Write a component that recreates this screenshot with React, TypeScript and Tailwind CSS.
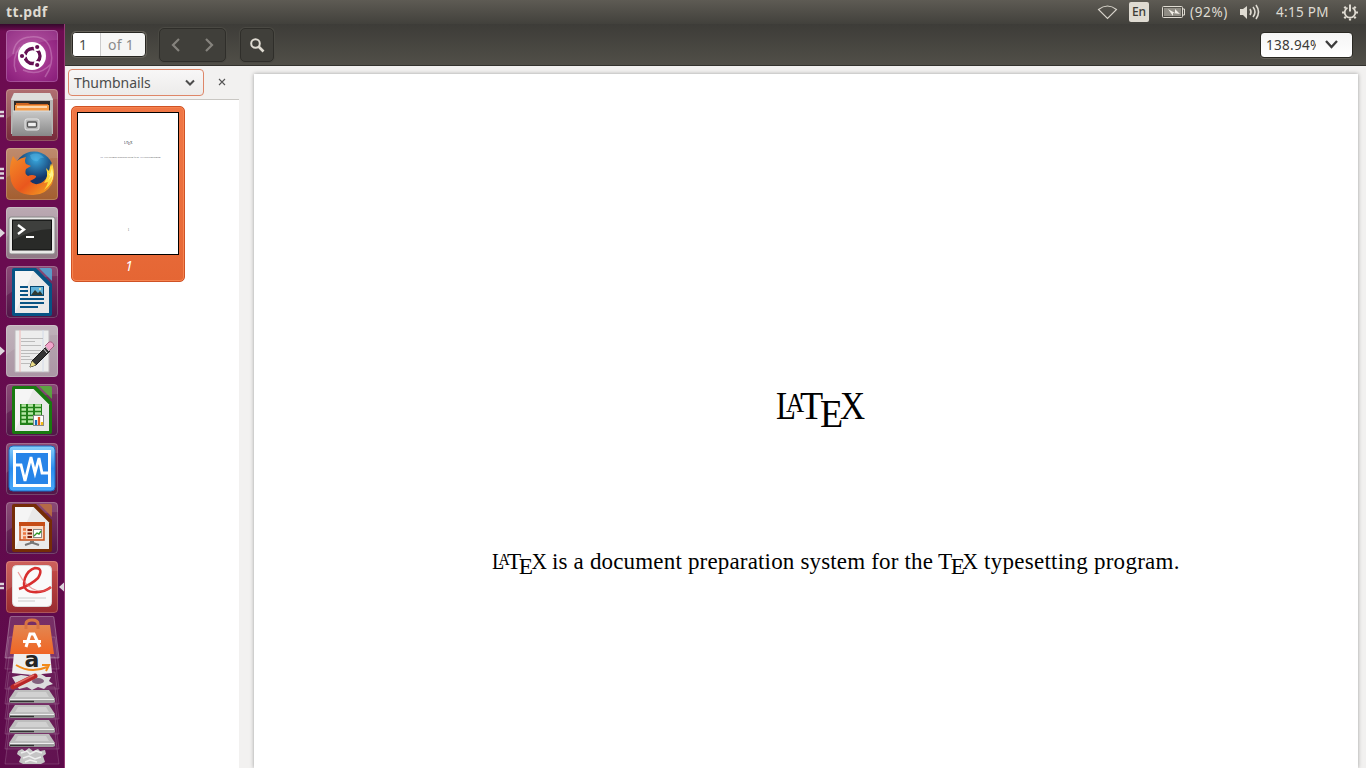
import type { ReactNode } from "react";

type TileProps = { bg: string; children: ReactNode; left?: "one" | "two" | "three"; active?: boolean };

function Tile({ bg, children, left, active }: TileProps) {
  return (
    <div className="relative flex h-[52px] w-16 shrink-0 pl-1.5">
      {left === "one" && (
        <svg className="absolute left-0 top-[21px]" width="5" height="10"><path d="M0 0.5L5 5L0 9.5Z" fill="#ddd5dc" /></svg>
      )}
      {left === "two" && (
        <svg className="absolute left-0 top-[21px]" width="5" height="9"><path d="M0 2h4M0 6h4" stroke="#ddd5dc" strokeWidth="2.4" /></svg>
      )}
      {left === "three" && (
        <svg className="absolute left-0 top-[19px]" width="5" height="13"><path d="M0 2h4M0 6.5h4M0 11h4" stroke="#ddd5dc" strokeWidth="2.4" /></svg>
      )}
      <div className={`relative h-[52px] w-[52px] overflow-hidden rounded-[4px] ${bg}`}>
        <svg width="52" height="52" viewBox="0 0 52 52" className="block">
          <path d="M0 0H52V10Q26 10 0 30Z" fill="#fff" opacity=".1" />
          {children}
          <rect x=".5" y=".5" width="51" height="51" rx="3.5" fill="none" stroke="#fff" strokeOpacity=".2" />
        </svg>
      </div>
      {active && (
        <svg className="absolute right-0 top-[21px]" width="5" height="10"><path d="M5 0.5L0 5L5 9.5Z" fill="#ddd5dc" /></svg>
      )}
    </div>
  );
}

function OfficePage({ dark, light, children }: { dark: string; light: string; children: ReactNode }) {
  return (
    <g>
      <path d="M8 2H30L46 18V48Q46 50 44 50H8Q6 50 6 48V4Q6 2 8 2Z" fill={dark} />
      <path d="M33 2H44Q46 2 46 4V15Z" fill={light} opacity=".85" />
      <path d="M9 5H27.500L43 20.500V47H9Z" fill="#f5f5f5" />
      <path d="M27.500 5L43 20.500V47L9 47Z" fill="#dedede" opacity=".5" />
      {children}
    </g>
  );
}

function Launcher() {
  return (
    <nav className="flex h-full w-[65px] shrink-0 flex-col border-r border-[#963b77] bg-[linear-gradient(180deg,#35082c_0,#6d0c51_7px,#690c50_240px,#5c0a4a_100%)]">
      <div className="flex h-[592px] shrink-0 flex-col gap-[7px] pt-1.5">
        <Tile bg="bg-[radial-gradient(circle,#bd6fae_0,#a1358e_45%,#861a77_100%)]">
          <path d="M7 24Q9 8 24 7Q42 5 45 22Q48 34 39 47M10 42Q5 29 14 17M17 40Q33 47 45 34" fill="none" stroke="#dda6d1" strokeWidth="1.500" opacity=".4" />
          <circle cx="26" cy="26" r="14" fill="#fff" />
          <circle cx="26.500" cy="26" r="7.500" fill="none" stroke="#651053" strokeWidth="3.300" />
          <path d="M26 26L14 26M26 26L32 15.600M26 26L32 36.400" stroke="#fff" strokeWidth="1.500" />
          <circle cx="16.500" cy="26" r="3.300" fill="#fff" /><circle cx="31" cy="17.700" r="3.300" fill="#fff" /><circle cx="31" cy="34.300" r="3.300" fill="#fff" />
          <circle cx="16" cy="26" r="2.100" fill="#651053" /><circle cx="31.200" cy="17" r="2.100" fill="#651053" /><circle cx="31.200" cy="35" r="2.100" fill="#651053" />
        </Tile>
        <Tile bg="bg-[linear-gradient(#a75f61,#762a3b)]" left="two">
          <path d="M8 4H44L47 10V45H5V10Z" fill="#b7b7b5" /><path d="M8 4H44L47 11H5Z" fill="#dededc" />
          <path d="M8 12H44V22H8Z" fill="#302b28" />
          <path d="M10 14H22L24 15H42V20H10Z" fill="#ce6622" /><path d="M9 16H43V22H9Z" fill="#f69b45" /><path d="M11 18H41" stroke="#ffebd0" strokeWidth="1.500" />
          <path d="M7 22H45L46 47H6Z" fill="url(#steel)" /><path d="M7 22H45" stroke="#ddd" />
          <rect x="19" y="30" width="14" height="11" rx="2" fill="#b7b7b7" stroke="#e8e8e8" />
          <rect x="21.500" y="33" width="9" height="5" rx="1" fill="#eee" stroke="#555" strokeWidth="1.300" />
        </Tile>
        <Tile bg="bg-[linear-gradient(#b87e5e,#a35e30)]" left="three">
          <circle cx="28" cy="23" r="19.500" fill="url(#globe)" />
          <path d="M24 7Q33 3 38 10Q34 9 32 13Q25 14 24 7Z" fill="#56b6e5" opacity=".5" />
          <path d="M7 8L11 13Q14 10 20 9Q18 13 20 16L25 18L20 21Q18 26 22 28Q26 26 30 28Q31 30 24 33Q28 38 35 35Q42 31 44 21L46 15Q50 27 46 36Q39 48 25 47Q9 46 5 33Q2 19 7 8Z" fill="url(#fox)" />
          <path d="M43 12Q45 17 43 23L40 20Q43 28 38 35L42 34Q41 38 38 42Q52 32 46 15L45 19Z" fill="#ffd83c" />
          <path d="M42 25L44 28L42 33L46 28Q46 35 41 39Q50 32 46 20L44 26Z" fill="#fff38c" />
        </Tile>
        <Tile bg="bg-[linear-gradient(#b5a2ac,#8f7784)]" left="one">
          <rect x="3" y="10" width="46" height="37" rx="2" fill="#e9e9e7" stroke="#888" />
          <rect x="6.500" y="13" width="39" height="30" fill="#292a28" stroke="#111" />
          <path d="M7 14H45V22Q27 22 7 33Z" fill="#fff" opacity=".1" />
          <path d="M12 18L18 22.500L12 27" fill="none" stroke="#fff" strokeWidth="2.400" /><path d="M20 30H28" stroke="#fff" strokeWidth="2.200" />
        </Tile>
        <Tile bg="bg-[linear-gradient(#7e3667,#521548)]">
          <OfficePage dark="#075384" light="#53a9d5">
            <path d="M14 21H22M14 25H22M14 29H22M14 33H38M14 37H38M14 41H32" stroke="#075384" strokeWidth="2" />
            <rect x="24.500" y="20.500" width="13" height="9" fill="#63b3da" stroke="#064771" /><path d="M25 29L29 24L32 27L34 25L37 29Z" fill="#313b32" /><circle cx="34" cy="23" r="1" fill="#ffe8a2" />
          </OfficePage>
        </Tile>
        <Tile bg="bg-[linear-gradient(#b9a9b2,#ab96a5)]" left="one">
          <path d="M9 5H43V47H9Z" fill="#ededed" stroke="#bcb7bb" /><path d="M14 5V47" stroke="#efb7b5" strokeWidth="1" /><path d="M37 5V47" stroke="#d2dae9" />
          <path d="M15 13.500H37M15 16.500H29M15 20.500H35M15 25.500H35M15 28.500H33M15 31.500H24M15 34.500H29M15 38.500H24" stroke="#bbb" strokeWidth="1" />
          <path d="M26 36L40 22L44 26L30 40L24 42Z" fill="#343434" stroke="#181818" /><path d="M26 36L30 40L24 42Z" fill="#eadb86" />
          <path d="M39 21L43 17Q47 16 48 21L43 26Z" fill="#f1a4cb" stroke="#a45f80" /><path d="M37 23L41 28M39 21L43 26" stroke="#ddd" />
        </Tile>
        <Tile bg="bg-[linear-gradient(#7e3667,#521548)]">
          <OfficePage dark="#197910" light="#55b13a">
            <rect x="14" y="20" width="22" height="21" fill="#218018" /><path d="M15.500 21.500H20M22 21.500H27M29 21.500H35M15.500 25.500H20M22 25.500H27M29 25.500H35M15.500 29.500H20M22 29.500H27M29 29.500H35M15.500 33.500H20M22 33.500H27M15.500 37.500H20M22 37.500H27" stroke="#b7e8a5" strokeWidth="2.500" />
            <rect x="27.500" y="31.500" width="10" height="10" fill="#fff" stroke="#888" /><path d="M30 41V36" stroke="#176fbb" strokeWidth="2.300" /><path d="M33 41V33" stroke="#df5b22" strokeWidth="2.300" /><path d="M36 41V38" stroke="#f3bd16" strokeWidth="2.300" />
          </OfficePage>
        </Tile>
        <Tile bg="bg-[linear-gradient(#7e3667,#521548)]">
          <rect x="3" y="3" width="46" height="45" rx="4" fill="url(#blue)" stroke="#166bc2" /><rect x="8.500" y="8.500" width="35" height="34" fill="#2784e8" stroke="#fff" strokeWidth="3" />
          <path d="M10 22H15L19 38L25 14L29 30L33 15L36 30H42" fill="none" stroke="#fff" strokeWidth="2.800" />
        </Tile>
        <Tile bg="bg-[linear-gradient(#7e3667,#521548)]">
          <OfficePage dark="#752c07" light="#bd713f">
            <path d="M14 22V38H38V22" fill="#f9dac6" stroke="#c54c16" strokeWidth="1.500" /><path d="M13 22H39" stroke="#c54c16" strokeWidth="4" />
            <path d="M17 27.500H20M17 31.500H20M17 35.500H20" stroke="#ed7842" strokeWidth="2.500" /><path d="M21.500 28H26M21.500 31.500H26M21.500 35H26" stroke="#7b1e09" strokeWidth="2" />
            <rect x="27.500" y="27.500" width="8" height="8" fill="#fff" stroke="#888" /><path d="M28 34L31 31L33 32L35 29" fill="none" stroke="#31992b" strokeWidth="1.400" />
            <path d="M25 39V41L19 43M27 39V41L33 43" fill="none" stroke="#777" strokeWidth="2" />
          </OfficePage>
        </Tile>
        <Tile bg="bg-[linear-gradient(#c94f49,#982b30)]" left="two" active>
          <rect x="6.500" y="4.500" width="39" height="41" rx="4" fill="#fafafa" stroke="#ddd" /><path d="M12 37H40M12 40H29" stroke="#ccc" strokeWidth="1.200" />
          <path d="M13 28Q25 24 32 17Q38 7 29 7Q22 9 19 17Q15 30 27 31Q38 32 45 26" fill="none" stroke="#d82f2f" strokeWidth="2.500" />
          <path d="M12 11Q20 27 32 30Q40 31 45 26" fill="none" stroke="#e46462" strokeWidth="1.200" opacity=".6" />
        </Tile>
      </div>
      <svg width="64" height="152" viewBox="0 0 64 152" className="shrink-0">
        {[35, 55, 70, 85, 100, 115, 130].map((y) => (
          <path key={y} d={`M9 ${y - 14}H55L59 ${y + 18}H5Z`} fill="#fff" fillOpacity=".04" stroke="#fff" strokeOpacity=".16" />
        ))}
        <path d="M11 .5H53Q54 .5 54 2L59 42H5L10 2Q10 .5 11 .5Z" fill="#fff" fillOpacity=".15" stroke="#fff" strokeOpacity=".3" />
        <path d="M14 37H50L52 57L32 59L12 57Z" fill="#eee" />
        <text x="32" y="51" textAnchor="middle" className="font-['DejaVu_Sans'] text-[22px] font-bold" fill="#252525">a</text>
        <path d="M16 49Q31 58 47 51M42 49H49L46 55" fill="none" stroke="#f18a18" strokeWidth="2" />
        <path d="M14 9H50L54 38H10Z" fill="url(#bag)" /><path d="M26 13V8Q26 4 32 4Q38 4 38 8V13" fill="none" stroke="#d77342" strokeWidth="3" />
        <path d="M26 31L30 18H34L40 31M23 25.500H41M29 18H35" fill="none" stroke="#fff" strokeWidth="3" />
        <path d="M12 61L21 59L28 60L34 58L41 58L46 61L51 61L49 65L53 68L47 70L44 73L38 71L32 74L27 71L19 73Z" fill="#ddd" /><ellipse cx="38" cy="65" rx="6" ry="3" fill="#83627e" />
        <path d="M13 71L35 60" stroke="#b82628" strokeWidth="5" strokeLinecap="round" /><path d="M14 69L34 59" stroke="#e36a62" strokeWidth="1.500" />
        {[74, 89, 104, 118].map((y) => (
          <g key={y}><path d={`M15 ${y}H49L55 ${y + 9}H9Z`} fill="#bdbdbd" /><path d={`M18 ${y + 2}H46L49 ${y + 7}H15Z`} fill="#d1d1d1" /><path d={`M9 ${y + 9}H55V${y + 12}L53 ${y + 13}H11L9 ${y + 12}Z`} fill="#9d9d9d" /><path d={`M10 ${y + 9.5}H54`} stroke="#eee" /><path d={`M10 ${y + 11.500}H34`} stroke="#333" strokeWidth="1.400" /></g>
        ))}
        <path d="M18 135L22 133L25 135L29 132L33 135L38 133L40 135L45 134L46 138L43 140L45 146L41 148H23L19 146L21 141L17 138Z" fill="#c5c5c5" /><path d="M21 137L27 135L30 138L36 135L42 137M23 142L29 140L35 143L41 141M25 146L30 144L37 146" fill="none" stroke="#eee" strokeWidth="1.500" />
      </svg>
    </nav>
  );
}

function StatusBar() {
  return (
    <header className="flex h-6 shrink-0 items-center bg-linear-to-b from-[#5e5b54] to-[#42413c] pl-1.5 font-['Noto_Sans','Open_Sans',sans-serif] text-[13.5px] leading-6 text-[#dfdbd2]">
      <span className="w-24 text-[14px] font-bold tracking-[0.4px]">tt.pdf</span>
      <div className="ml-auto flex h-6 items-center">
        <svg width="21" height="24" className="mr-[11px]"><path d="M1.500 9.500Q10.500 2.500 19.500 9.500L10.500 18.500Z" fill="none" stroke="#d8d4cb" strokeWidth="1.100" /></svg>
        <span className="mr-3 flex h-5 w-5 items-center justify-center rounded-[2px] bg-[#dfdbd2] text-[12px] font-medium text-[#3c3b37]">En</span>
        <svg width="25" height="24" className="mr-[3px]"><rect x="1.500" y="6.500" width="20" height="11" rx="1" fill="none" stroke="#dfdbd2" /><path d="M3 8H20V16H3Z" fill="#8f8c84" /><path d="M22 9H23.500V15H22" fill="none" stroke="#dfdbd2" /><path d="M7 9L14 13V9L19 14L12 13V16Z" fill="#f2eee7" /></svg>
        <span className="w-[51px] whitespace-nowrap pl-px tracking-[0.65px]">(92%)</span>
        <svg width="22" height="24" className="mr-3.5"><path d="M0 9H3L7 6V19L3 15H0Z" fill="#dfdbd2" /><path d="M10 9Q12 12 10 15M13 7Q17 12 13 17M16 5Q21 12 16 19" fill="none" stroke="#dfdbd2" strokeWidth="1.600" /></svg>
        <span className="w-[65px] whitespace-nowrap tracking-[0.3px]">4:15 PM</span>
        <svg width="25" height="24"><g transform="translate(9 12.5)" fill="none" stroke="#dfdbd2"><path d="M-2.500 -4.800A5.300 5.300 0 1 0 2.500 -4.800" strokeWidth="1.800" /><path d="M0 -8V-1" strokeWidth="2" /><path d="M6 0H8M-6 0H-8M0 6V8M4.200 4.200L5.700 5.700M-4.200 4.200L-5.700 5.700M4.200 -4.200L5.700 -5.700M-4.200 -4.200L-5.700 -5.700" strokeWidth="2.200" /></g></svg>
      </div>
    </header>
  );
}

function Toolbar() {
  return (
    <div className="flex h-[42px] shrink-0 items-start border-b border-[#33322e] bg-linear-to-b from-[#3d3c38] to-[#514f48] pl-[7px] pt-1 font-['Noto_Sans',sans-serif] text-[14px] text-[#4c4c4c]">
      <div className="mt-1 flex h-[25px] w-[74px] overflow-hidden rounded-[4px] border border-[#282722] bg-[#f6f6f5] leading-[23px] shadow-[0_0_0_1px_#65625a]">
        <span className="w-7 border-r border-[#ccc] bg-white pl-1.5">1</span>
        <span className="pl-[7px] tracking-[0.3px] text-[#8b8b8b]">of 1</span>
      </div>
      <div className="ml-[13px] flex h-[34px] w-[67px] items-center justify-around rounded-[5px] border border-[#2f2e2a] bg-[#403f3a] shadow-[0_0_0_1px_#4a4943]">
        <svg width="12" height="16"><path d="M9 2L3 8L9 14" fill="none" stroke="#85837d" strokeWidth="2.200" /></svg>
        <svg width="12" height="16"><path d="M3 2L9 8L3 14" fill="none" stroke="#85837d" strokeWidth="2.200" /></svg>
      </div>
      <div className="ml-3.5 flex h-[34px] w-[34px] items-center justify-center rounded-[5px] border border-[#2f2e2a] bg-[#403f3a] shadow-[0_0_0_1px_#4a4943]">
        <svg width="16" height="16"><circle cx="6.500" cy="6.500" r="4.300" fill="none" stroke="#dfdbd2" strokeWidth="2" /><path d="M9.500 9.500L14.500 14.500" stroke="#dfdbd2" strokeWidth="2.600" /></svg>
      </div>
      <div className="ml-auto mr-[13px] mt-1 flex h-[26px] w-[93px] items-center rounded-[4px] border border-[#292822] bg-linear-to-b from-[#f5f5f5] to-white pl-[5px] shadow-[0_1px_0_#67645d]">
        <span className="w-[50px] overflow-hidden whitespace-nowrap text-[13.5px] tracking-[0.3px] text-[#3c3b37]">138.94%</span>
        <svg width="18" height="14" className="ml-2"><path d="M2 3L7.500 9L13 3" fill="none" stroke="#3c3c3c" strokeWidth="2.300" /></svg>
      </div>
    </div>
  );
}

function Tex() {
  return <><span className="inline-block w-[0.5em] origin-left scale-x-95">T</span><span className="relative top-[0.2em] inline-block w-[0.5em] origin-left scale-x-95">E</span><span className="inline-block w-[0.62em] origin-left scale-x-[0.87]">X</span></>;
}

function Latex() {
  return <><span className="inline-block w-[0.25em] origin-left scale-x-[0.82]">L</span><span className="relative -top-[0.26em] inline-block w-[0.5em] origin-left scale-x-[0.9] text-[0.7em]">A</span><Tex /></>;
}

function Sidebar() {
  return (
    <aside className="flex w-[174px] shrink-0 flex-col bg-white font-['Noto_Sans',sans-serif]">
      <div className="flex h-[34px] shrink-0 items-start border-b border-[#c9c7c3] bg-[#f2f1f0] pl-[3px] pt-[3px]">
        <div className="flex h-[27px] w-[136px] items-center justify-between rounded-[4px] border border-[#de8668] bg-linear-to-b from-[#f8f7f7] to-[#ecebea] pl-[5px] pr-[7px] text-[14px] text-[#4c4c4c]">
          <span className="tracking-[-0.05px]">Thumbnails</span>
          <svg width="12" height="12"><path d="M2 3.500L6 7.500L10 3.500" fill="none" stroke="#4c4c4c" strokeWidth="2" /></svg>
        </div>
        <svg width="8" height="8" className="ml-3.5 mt-[9px]"><path d="M1 1L7 7M7 1L1 7" stroke="#555" strokeWidth="1.100" /></svg>
      </div>
      <div className="ml-1.5 mt-1.5 flex h-[176px] w-[114px] flex-col items-center rounded-[5px] border border-[#cf5225] bg-linear-to-b from-[#f07746] to-[#e56634] pt-[5px] shadow-[inset_0_0_0_1px_#f68450]">
        <div className="flex h-[143px] w-[102px] shrink-0 flex-col items-center border border-black bg-white font-['Liberation_Serif',serif] text-[#444]">
          <div className="mt-[26px] h-2 whitespace-nowrap text-[4px] leading-2"><Latex /></div>
          <div className="ml-[5px] mt-[9px] h-[3px] whitespace-nowrap text-[2.1px] leading-[3px]"><Latex /> is a document preparation system for the <Tex /> typesetting program.</div>
          <div className="mt-[69px] pl-px text-[3px] leading-[4px]">1</div>
        </div>
        <span className="mt-px pl-0.5 text-[13.5px] italic leading-5 text-white">1</span>
      </div>
    </aside>
  );
}

export default function App() {
  return (
    <div className="flex h-screen w-screen flex-col overflow-hidden bg-[#f2f1f0]">
      <svg width="0" height="0" className="absolute">
        <defs>
          <linearGradient id="steel" x2="0" y2="1"><stop stopColor="#c9c9c9" /><stop offset="1" stopColor="#888" /></linearGradient>
          <radialGradient id="globe" cx=".55" cy=".2"><stop stopColor="#39a9df" /><stop offset="1" stopColor="#143568" /></radialGradient>
          <linearGradient id="fox" x2="1" y2="1"><stop stopColor="#f48d28" /><stop offset=".55" stopColor="#e9571d" /><stop offset="1" stopColor="#f5ae25" /></linearGradient>
          <linearGradient id="blue" x2="0" y2="1"><stop stopColor="#8ad0fb" /><stop offset=".5" stopColor="#2b8def" /><stop offset="1" stopColor="#4ba9fa" /></linearGradient>
          <linearGradient id="bag" x2="0" y2="1"><stop stopColor="#e38751" /><stop offset="1" stopColor="#f06524" /></linearGradient>
        </defs>
      </svg>
      <StatusBar />
      <div className="flex h-[744px]">
        <Launcher />
        <div className="flex min-w-0 flex-1 flex-col">
          <Toolbar />
          <div className="flex min-h-0 flex-1">
            <Sidebar />
            <main className="flex min-w-0 flex-1 bg-[#f2f1f0] pl-[15px] pr-2 pt-2">
              <article className="flex min-w-0 flex-1 flex-col bg-white pt-[307px] font-['Liberation_Serif',serif] text-black shadow-[0_0_4px_rgba(0,0,0,0.35)]">
                <h1 className="ml-[522px] h-[50px] whitespace-nowrap text-[40px] leading-[50px]"><Latex /></h1>
                <p className="ml-[238px] mt-[116px] flex h-[30px] whitespace-nowrap text-[23px] leading-[30px]">
                  <span className="w-[60px] origin-left scale-x-[1.07]"><Latex /></span>
                  <span className="w-[386px] tracking-[0.17px]">is a document preparation system for the</span>
                  <span className="w-[46px] origin-left scale-x-[1.07]"><Tex /></span>
                  <span className="tracking-[0.27px]">typesetting program.</span>
                </p>
              </article>
            </main>
          </div>
        </div>
      </div>
    </div>
  );
}
